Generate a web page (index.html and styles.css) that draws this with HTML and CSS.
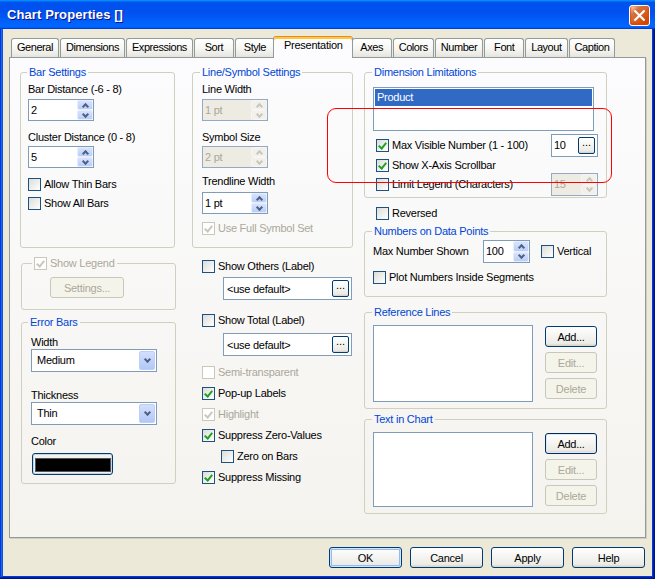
FILE: index.html
```html
<!DOCTYPE html>
<html>
<head>
<meta charset="utf-8">
<title>Chart Properties</title>
<link rel="stylesheet" href="styles.css">
</head>
<body>
<div class="window">
  <div class="titlebar">
    <span class="title">Chart Properties []</span>
    <span class="close-btn"><svg width="11" height="11" viewBox="0 0 11 11"><path d="M1.2 1.2 L9.8 9.8 M9.8 1.2 L1.2 9.8" stroke="#fff" stroke-width="2.2" stroke-linecap="square" fill="none"/></svg></span>
  </div>
  <div class="client">
    <div class="tabs">
      <span class="tab">General</span>
      <span class="tab">Dimensions</span>
      <span class="tab">Expressions</span>
      <span class="tab">Sort</span>
      <span class="tab">Style</span>
      <span class="tab active">Presentation</span>
      <span class="tab">Axes</span>
      <span class="tab">Colors</span>
      <span class="tab">Number</span>
      <span class="tab">Font</span>
      <span class="tab">Layout</span>
      <span class="tab">Caption</span>
    </div>
    <div class="panel">
      <div class="col col-left">
        <fieldset class="group g-bar">
          <legend>Bar Settings</legend>
          <div class="label mt4">Bar Distance (-6 - 8)</div>
          <div class="spin mt3"><span class="spin-val">2</span><span class="spin-btns"><span class="spin-up"></span><span class="spin-dn"></span></span></div>
          <div class="label mt10">Cluster Distance (0 - 8)</div>
          <div class="spin mt2"><span class="spin-val">5</span><span class="spin-btns"><span class="spin-up"></span><span class="spin-dn"></span></span></div>
          <div class="row mt10"><span class="cb"></span>Allow Thin Bars</div>
          <div class="row mt6"><span class="cb"></span>Show All Bars</div>
        </fieldset>
        <fieldset class="group g-legend">
          <legend class="cb-legend"><span class="cb dis on"></span>Show Legend</legend>
          <div class="btn dis btn-settings">Settings...</div>
        </fieldset>
        <fieldset class="group g-error">
          <legend>Error Bars</legend>
          <div class="label mt7">Width</div>
          <div class="combo"><span class="combo-val">Medium</span><span class="combo-btn"></span></div>
          <div class="label mt17">Thickness</div>
          <div class="combo"><span class="combo-val">Thin</span><span class="combo-btn"></span></div>
          <div class="label mt10">Color</div>
          <div class="color-btn mt5"><span class="swatch"></span></div>
        </fieldset>
      </div>

      <div class="col col-mid">
        <fieldset class="group g-line">
          <legend>Line/Symbol Settings</legend>
          <div class="label mt4">Line Width</div>
          <div class="spin dis mt3"><span class="spin-val">1 pt</span><span class="spin-btns"><span class="spin-up"></span><span class="spin-dn"></span></span></div>
          <div class="label mt10">Symbol Size</div>
          <div class="spin dis mt2"><span class="spin-val">2 pt</span><span class="spin-btns"><span class="spin-up"></span><span class="spin-dn"></span></span></div>
          <div class="label mt7">Trendline Width</div>
          <div class="spin mt4"><span class="spin-val">1 pt</span><span class="spin-btns"><span class="spin-up"></span><span class="spin-dn"></span></span></div>
          <div class="row dis mt8"><span class="cb dis on"></span>Use Full Symbol Set</div>
        </fieldset>
        <div class="row opt mt12"><span class="cb"></span>Show Others (Label)</div>
        <div class="field opt-field mt4"><span class="field-val">&lt;use default&gt;</span><span class="btn dots">...</span></div>
        <div class="row opt mt14"><span class="cb"></span>Show Total (Label)</div>
        <div class="field opt-field mt6"><span class="field-val">&lt;use default&gt;</span><span class="btn dots">...</span></div>
        <div class="row opt dis mt10"><span class="cb dis"></span>Semi-transparent</div>
        <div class="row opt mt8"><span class="cb on"></span>Pop-up Labels</div>
        <div class="row opt dis mt8"><span class="cb dis on"></span>Highlight</div>
        <div class="row opt mt8"><span class="cb on"></span>Suppress Zero-Values</div>
        <div class="row opt-sub mt8"><span class="cb"></span>Zero on Bars</div>
        <div class="row opt mt8"><span class="cb on"></span>Suppress Missing</div>
      </div>

      <div class="col col-right">
        <fieldset class="group g-dim">
          <legend>Dimension Limitations</legend>
          <div class="listbox dim-list mt8"><div class="list-item sel">Product</div></div>
          <div class="row tall mt3"><span class="cb on ind"></span>Max Visible Number (1 - 100)<span class="field num-field"><span class="field-val">10</span><span class="btn dots">...</span></span></div>
          <div class="row mt2"><span class="cb on ind"></span>Show X-Axis Scrollbar</div>
          <div class="row tall mt1"><span class="cb ind"></span>Limit Legend (Characters)<span class="spin dis num-spin"><span class="spin-val">15</span><span class="spin-btns"><span class="spin-up"></span><span class="spin-dn"></span></span></span></div>
        </fieldset>
        <div class="row reversed mt9"><span class="cb"></span>Reversed</div>
        <fieldset class="group g-num">
          <legend>Numbers on Data Points</legend>
          <div class="row tall mt2"><span class="num-label">Max Number Shown</span><span class="spin num-spin2"><span class="spin-val">100</span><span class="spin-btns"><span class="spin-up"></span><span class="spin-dn"></span></span></span><span class="cb vert-cb"></span>Vertical</div>
          <div class="row mt8"><span class="cb"></span>Plot Numbers Inside Segments</div>
        </fieldset>
        <fieldset class="group g-ref">
          <legend>Reference Lines</legend>
          <div class="list-row mt6">
            <div class="listbox ref-list"></div>
            <div class="btn-col">
              <div class="btn btn-sm mt1">Add...</div>
              <div class="btn btn-sm dis mt5">Edit...</div>
              <div class="btn btn-sm dis mt5">Delete</div>
            </div>
          </div>
        </fieldset>
        <fieldset class="group g-text">
          <legend>Text in Chart</legend>
          <div class="list-row mt6">
            <div class="listbox text-list"></div>
            <div class="btn-col">
              <div class="btn btn-sm focus mt1">Add...</div>
              <div class="btn btn-sm dis mt5">Edit...</div>
              <div class="btn btn-sm dis mt5">Delete</div>
            </div>
          </div>
        </fieldset>
      </div>
    </div>
    <div class="footer">
      <div class="btn btn-lg default">OK</div>
      <div class="btn btn-lg">Cancel</div>
      <div class="btn btn-lg">Apply</div>
      <div class="btn btn-lg">Help</div>
    </div>
  </div>
  <div class="annotation"></div>
</div>
</body>
</html>
```

FILE: styles.css
```css
* { box-sizing: border-box; }
html, body { margin: 0; padding: 0; }
body {
  width: 655px;
  height: 579px;
  overflow: hidden;
  font-family: "Liberation Sans", Arial, sans-serif;
  font-size: 11px;
  letter-spacing: -0.25px;
  color: #000;
  background: #ECE9D8;
}

.window {
  position: relative;
  width: 655px;
  height: 579px;
  display: flex;
  flex-direction: column;
  background: #ECE9D8;
  box-shadow: inset -1px -1px #00138c, inset 1px 1px #0831d9, inset -2px -2px #001ea0, inset 2px 2px #166aee, inset -3px -3px #003bda, inset 3px 3px #0855dd;
}

.titlebar {
  height: 29px;
  flex: none;
  display: flex;
  align-items: flex-start;
  justify-content: space-between;
  padding: 0 5px 0 7px;
  background: linear-gradient(180deg, #0997ff, #0053ee 8%, #0050ee 40%, #0066ff 88%, #0066ff 93%, #005bff 95%, #003dd7 96%, #003dd7);
}
.title {
  color: #fff;
  font-weight: bold;
  font-size: 13px;
  letter-spacing: 0.1px;
  line-height: 29px;
  text-shadow: 1px 1px #0f1089;
}
.close-btn {
  width: 21px;
  height: 21px;
  margin-top: 5px;
  border: 1px solid #fff;
  border-radius: 3px;
  display: flex;
  align-items: center;
  justify-content: center;
  background: radial-gradient(circle at 90% 90%, #cc4600 0, #dc6527 55%, #cd7546 70%, #ffccb2 90%, #fff 100%);
  box-shadow: inset 0 -1px 2px 1px #da4600;
}

.client {
  flex: 1;
  margin: 0 3px 3px;
  padding-top: 7px;
  display: flex;
  flex-direction: column;
}

/* tabs */
.tabs {
  display: flex;
  align-items: flex-end;
  height: 21px;
  margin-left: 8px;
  position: relative;
  z-index: 2;
}
.tab {
  height: 19px;
  min-width: 40px;
  padding: 0 5px;
  margin-right: 1px;
  border: 1px solid #919B9C;
  border-bottom: none;
  border-radius: 3px 3px 0 0;
  background: linear-gradient(180deg, #FFFFFF, #F7F7F4 50%, #ECEBE6 85%, #E3E2DB);
  line-height: 17px;
  letter-spacing: -0.45px;
  text-align: center;
  white-space: nowrap;
}
.tab.active {
  height: 22px;
  margin: 0 -1px -1px -3px;
  padding: 0 9px 3px 10px;
  background: #FCFCFE;
  border-top: 1px solid #E68B2C;
  box-shadow: inset 0 2px 0 #FFC83C;
  line-height: 17px;
  letter-spacing: -0.25px;
}

.panel {
  width: 637px;
  height: 481px;
  margin-left: 6px;
  border: 1px solid #919B9C;
  background: linear-gradient(180deg, #FCFCFE, #F4F3EE);
  box-shadow: 1px 1px 0 #D0CEBF;
  display: flex;
  align-items: flex-start;
  padding: 8px 0 0 10px;
}

.col { display: flex; flex-direction: column; align-items: flex-start; }
.col-left { width: 156px; }
.col-mid { width: 161px; margin-left: 16px; }
.col-right { width: 243px; margin-left: 11px; }

/* group boxes */
.group {
  margin: 0;
  border: 1px solid #D0D0BF;
  border-radius: 3px;
  min-width: 0;
  display: flex;
  flex-direction: column;
  align-items: flex-start;
}
.group > legend {
  padding: 0 2px;
  margin-left: -1px;
  color: #0046D5;
  line-height: 13px;
  height: 13px;
  white-space: nowrap;
}
.g-bar { width: 155px; padding: 0 8px 37px 7px; }
.g-legend { width: 155px; margin-left: 1px; margin-top: 9px; padding: 0 8px 11px 9px; }
.g-legend > legend.cb-legend { margin-left: 1px; display: flex; align-items: center; gap: 3px; color: #ACA899; }
.g-error { width: 155px; margin-left: 1px; margin-top: 6px; padding: 0 8px 8px 9px; }
.g-error > legend { margin-left: -3px; }
.g-line { width: 161px; padding: 0 8px 12px 9px; }
.g-line > legend { margin-left: -2px; }
.g-dim { width: 243px; padding: 0 8px 1px 8px; align-items: stretch; }
.g-num { width: 243px; margin-top: 5px; padding: 0 8px 12px 8px; align-items: stretch; }
.g-ref { width: 243px; margin-top: 9px; padding: 0 8px 6px 8px; align-items: stretch; }
.g-text { width: 243px; margin-top: 4px; padding: 0 8px 6px 8px; align-items: stretch; }

.label { line-height: 13px; height: 13px; white-space: nowrap; }
.row {
  display: flex;
  align-items: center;
  gap: 3px;
  height: 13px;
  line-height: 13px;
  white-space: nowrap;
}
.row.tall { height: 23px; }
.row.dis { color: #ACA899; }

.mt1 { margin-top: 1px; }
.mt2 { margin-top: 2px; }
.mt3 { margin-top: 3px; }
.mt4 { margin-top: 4px; }
.mt5 { margin-top: 5px; }
.mt6 { margin-top: 6px; }
.mt7 { margin-top: 7px; }
.mt8 { margin-top: 8px; }
.mt9 { margin-top: 9px; }
.mt10 { margin-top: 10px; }
.mt12 { margin-top: 12px; }
.mt14 { margin-top: 14px; }
.mt17 { margin-top: 17px; }

/* checkbox */
.cb {
  position: relative;
  width: 13px;
  height: 13px;
  flex: none;
  border: 1px solid #1C5180;
  background: linear-gradient(135deg, #DCDCD7, #FFFFFF);
}
.cb.on::after {
  content: "";
  position: absolute;
  left: 3px;
  top: 1px;
  width: 3px;
  height: 6px;
  border: solid #21A121;
  border-width: 0 2px 2px 0;
  transform: rotate(40deg);
}
.cb.dis { border-color: #CAC8BB; background: #FFFFFF; }
.cb.dis.on::after { border-color: #CAC8BB; }
.cb.ind { margin-left: 3px; }

/* spin edit */
.spin {
  display: flex;
  width: 66px;
  height: 22px;
  flex: none;
  border: 1px solid #7F9DB9;
  background: #fff;
}
.spin-val { flex: 1; padding-left: 2px; line-height: 20px; color: #000; }
.spin-btns { width: 16px; display: flex; flex-direction: column; }
.spin-up, .spin-dn {
  flex: 1;
  display: flex;
  align-items: center;
  justify-content: center;
  background: linear-gradient(180deg, #D8E3FD, #BACDF8);
  border: 1px solid #E6EDFD;
  border-radius: 2px;
}
.spin-up::before, .spin-dn::before {
  content: "";
  width: 3px;
  height: 3px;
  border: solid #4D6185;
}
.spin-up::before { border-width: 2px 0 0 2px; transform: translateY(1px) rotate(45deg); }
.spin-dn::before { border-width: 0 2px 2px 0; transform: translateY(-1px) rotate(45deg); }
.spin.dis { background: #EDEBE2; border-color: #93A9C4; }
.spin.dis .spin-val { color: #ACA899; }
.spin.dis .spin-up, .spin.dis .spin-dn { background: #F1F0EA; border-color: #F7F6F2; }
.spin.dis .spin-up::before, .spin.dis .spin-dn::before { border-color: #C9C7BA; }

.num-spin { width: 47px; height: 23px; margin-left: auto; background: #F4F3EE; border-color: #B4C3D6; }
.num-spin2 { width: 47px; height: 23px; }
.num-label { width: 107px; }
.vert-cb { margin-left: 8px; }

/* combo */
.combo {
  display: flex;
  align-items: stretch;
  width: 126px;
  height: 23px;
  border: 1px solid #7F9DB9;
  background: #fff;
  padding: 1px;
}
.combo-val { flex: 1; padding-left: 4px; line-height: 19px; }
.combo-btn {
  width: 16px;
  display: flex;
  align-items: center;
  justify-content: center;
  border: 1px solid #BCCFF9;
  border-radius: 2px;
  background: linear-gradient(180deg, #D3DFFD, #B3C8F7);
}
.combo-btn::before {
  content: "";
  width: 3px;
  height: 3px;
  border: solid #4D6185;
  border-width: 0 2px 2px 0;
  transform: translateY(-1px) rotate(45deg);
}

/* buttons */
.btn {
  display: flex;
  align-items: center;
  justify-content: center;
  height: 21px;
  border: 1px solid #003C74;
  border-radius: 3px;
  background: linear-gradient(180deg, #fff, #ecebe6 86%, #d6d0c5);
  white-space: nowrap;
}
.btn.dis { border-color: #C9C7BA; color: #ACA899; background: #F5F4EA; }
.btn-settings { width: 74px; margin-top: 7px; margin-left: 19px; }
.btn-sm { width: 52px; }
.btn.focus { box-shadow: inset 0 0 0 1px #E2E8F3; border-width: 1px; border-color: #002C5C; }
.btn-lg { width: 73px; }
.btn.default { box-shadow: inset 0 0 0 1px #CEE7FF, inset 0 0 0 2px #98B8EA; }
.dots {
  width: 17px;
  height: 17px;
  flex: none;
  border-radius: 2px;
  line-height: 17px;
  letter-spacing: 0;
  padding-bottom: 2px;
  align-items: flex-end;
}

.color-btn {
  width: 81px;
  height: 22px;
  margin-left: 1px;
  border: 1px solid #003C74;
  border-radius: 3px;
  padding: 4px 1px 2px 2px;
  background: #F3F2EC;
  box-shadow: inset 0 0 0 1px #C8D5E6;
  display: flex;
}
.swatch { flex: 1; background: #000; border: 1px solid #555; }

/* text fields */
.field {
  display: flex;
  align-items: center;
  height: 23px;
  border: 1px solid #7F9DB9;
  background: #fff;
  padding: 0 2px 0 3px;
}
.field-val { flex: 1; white-space: nowrap; }
.opt { margin-left: 10px; }
.opt-sub { margin-left: 29px; }
.opt-field { width: 129px; margin-left: 31px; }
.num-field { width: 47px; margin-left: auto; padding: 0 2px 0 2px; }

/* list boxes */
.listbox { border: 1px solid #7F9DB9; background: #fff; padding: 1px; }
.dim-list { width: 221px; height: 44px; }
.list-item.sel { background: #316AC5; color: #fff; height: 17px; line-height: 17px; padding-left: 2px; }
.list-row { display: flex; justify-content: space-between; align-items: flex-start; }
.ref-list { width: 160px; height: 77px; }
.text-list { width: 160px; height: 75px; }
.btn-col { display: flex; flex-direction: column; margin-right: 1px; }

.reversed { margin-left: 12px; }

.footer {
  display: flex;
  justify-content: flex-end;
  gap: 8px;
  margin-top: 9px;
  padding-right: 7px;
}

.annotation {
  position: absolute;
  left: 327px;
  top: 108px;
  width: 285px;
  height: 75px;
  border: 1px solid #FF0000;
  border-radius: 9px;
  pointer-events: none;
}
```
